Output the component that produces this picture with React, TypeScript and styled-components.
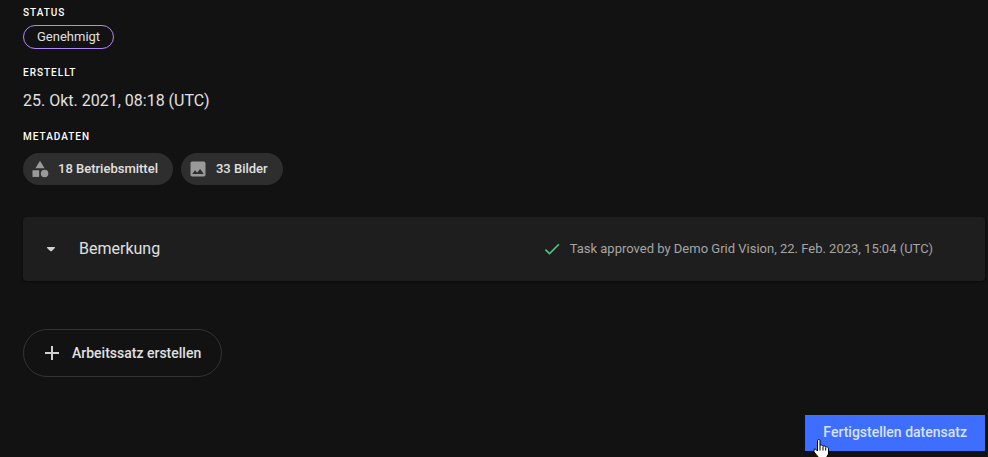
import React from "react";
import styled, { createGlobalStyle } from "styled-components";

const GlobalStyle = createGlobalStyle`
  *, *::before, *::after { box-sizing: border-box; }
  body {
    margin: 0;
    background: #121212;
    color: #e0e0e0;
    font-family: Roboto, "Liberation Sans", sans-serif;
  }
`;

const PageFrame = styled.div`
  overflow: hidden;
`;

const Page = styled.main`
  display: flex;
  flex-direction: column;
  padding: 5px 3px 6px 23px;
`;

const Details = styled.dl`
  margin: 0;
`;

const Term = styled.dt`
  font-size: 10px;
  line-height: 16px;
  font-weight: 500;
  letter-spacing: 1px;
  text-transform: uppercase;
  color: #ffffff;
`;

const Value = styled.dd<{ $top: number; $bottom: number }>`
  display: flex;
  flex-wrap: wrap;
  gap: 8px;
  margin: ${(p) => p.$top}px 0 ${(p) => p.$bottom}px;
  font-size: 16px;
  line-height: 24px;
`;

const StatusBadge = styled.span`
  height: 24px;
  padding: 0 13px;
  border: 1px solid #b388ff;
  border-radius: 12px;
  font-size: 13px;
  line-height: 22px;
`;

const Chip = styled.span`
  display: inline-flex;
  align-items: center;
  gap: 8px;
  height: 32px;
  padding: 0 15px 0 7px;
  border-radius: 16px;
  background: #2e2e2e;
  font-size: 13px;
  line-height: 20px;
  font-weight: 500;
`;

const Icon = styled.svg<{ $size: number; $color: string }>`
  display: block;
  flex: none;
  width: ${(p) => p.$size}px;
  height: ${(p) => p.$size}px;
  fill: ${(p) => p.$color};
`;

const Panel = styled.button`
  display: flex;
  align-items: center;
  width: 100%;
  min-height: 64px;
  padding: 0 52px 0 16px;
  border: 0;
  border-radius: 4px;
  background: #1e1e1e;
  box-shadow: 0 1px 2px rgba(0, 0, 0, 0.5);
  color: inherit;
  font: inherit;
  text-align: left;
  cursor: pointer;
`;

const PanelTitle = styled.span`
  margin-left: 16px;
  font-size: 16px;
  line-height: 24px;
`;

const PanelNote = styled.span`
  display: flex;
  align-items: center;
  gap: 8px;
  margin-left: auto;
  font-size: 13px;
  line-height: 20px;
  color: #a5a5a5;
`;

const CreateButton = styled.button`
  display: inline-flex;
  align-items: center;
  align-self: flex-start;
  gap: 8px;
  height: 48px;
  margin-top: 48px;
  padding: 0 20px 0 16px;
  border: 1px solid #333333;
  border-radius: 24px;
  background: transparent;
  color: #e0e0e0;
  font: 500 14px/20px Roboto, "Liberation Sans", sans-serif;
  cursor: pointer;
`;

const Actions = styled.div`
  display: flex;
  justify-content: flex-end;
  margin-top: 38px;
`;

const FinishButton = styled.button`
  position: relative;
  height: 36px;
  padding: 0 18px 2px;
  border: 0;
  background: #3d6eff;
  color: #d8e2ff;
  font: 500 14px/20px Roboto, "Liberation Sans", sans-serif;
  cursor: pointer;
`;

const Pointer = styled.svg`
  position: absolute;
  left: 8px;
  top: 24px;
  width: 17px;
  height: 22px;
`;

export default function App() {
  return (
    <PageFrame>
      <GlobalStyle />
      <Page>
        <Details>
          <Term>Status</Term>
          <Value $top={4} $bottom={16}>
            <StatusBadge>Genehmigt</StatusBadge>
          </Value>
          <Term>Erstellt</Term>
          <Value $top={8} $bottom={16}>25. Okt. 2021, 08:18 (UTC)</Value>
          <Term>Metadaten</Term>
          <Value $top={8} $bottom={32}>
            <Chip>
              <Icon $size={20} $color="#9a9a9a" viewBox="0 0 24 24" aria-hidden="true">
                <path d="M12 2l-5.5 9h11z" />
                <circle cx="17.5" cy="17.5" r="4.5" />
                <rect x="3" y="13.5" width="8" height="8" />
              </Icon>
              18 Betriebsmittel
            </Chip>
            <Chip>
              <Icon $size={20} $color="#9a9a9a" viewBox="0 0 24 24" aria-hidden="true">
                <path d="M21 19V5c0-1.1-.9-2-2-2H5c-1.1 0-2 .9-2 2v14c0 1.1.9 2 2 2h14c1.1 0 2-.9 2-2zM8.5 13.5l2.5 3.01L14.5 12l4.5 6H5l3.5-4.5z" />
              </Icon>
              33 Bilder
            </Chip>
          </Value>
        </Details>

        <Panel type="button" aria-expanded="false">
          <Icon $size={24} $color="#cfcfcf" viewBox="0 0 24 24" aria-hidden="true">
            <path d="M8.500 10h7q1 .2.400 1l-3 3q-.9.700-1.800 0l-3-3q-.6-.8.400-1z" />
          </Icon>
          <PanelTitle>Bemerkung</PanelTitle>
          <PanelNote>
            <Icon $size={20} $color="#4fc784" viewBox="0 0 24 24" aria-hidden="true">
              <path d="M9 16.17L4.83 12l-1.42 1.41L9 19 21 7l-1.41-1.41z" />
            </Icon>
            Task approved by Demo Grid Vision, 22. Feb. 2023, 15:04 (UTC)
          </PanelNote>
        </Panel>

        <CreateButton type="button">
          <Icon $size={24} $color="#d0d0d0" viewBox="0 0 24 24" aria-hidden="true">
            <path d="M19 13h-6v6h-2v-6H5v-2h6V5h2v6h6v2z" />
          </Icon>
          Arbeitssatz erstellen
        </CreateButton>

        <Actions>
          <FinishButton type="button">
            Fertigstellen datensatz
            <Pointer viewBox="0 0 17 22" aria-hidden="true">
              <path
                d="M4.500 1.500c0-1.300 2.500-1.300 2.500 0v5c.5-.8 2.700-.5 3 .7.700-.6 2.400-.3 2.700.9.900-.6 2.800 0 2.800 1.700v5.200l-2 3.500v3H6v-2.500L1 13v-2.500c1.200-1 2.500 0 3.500 1.500z"
                fill="#ffffff"
                stroke="#000000"
              />
              <path d="M7 6.500v5M10 7.500v4M12.700 8.500v3" fill="none" stroke="#000000" />
            </Pointer>
          </FinishButton>
        </Actions>
      </Page>
    </PageFrame>
  );
}
